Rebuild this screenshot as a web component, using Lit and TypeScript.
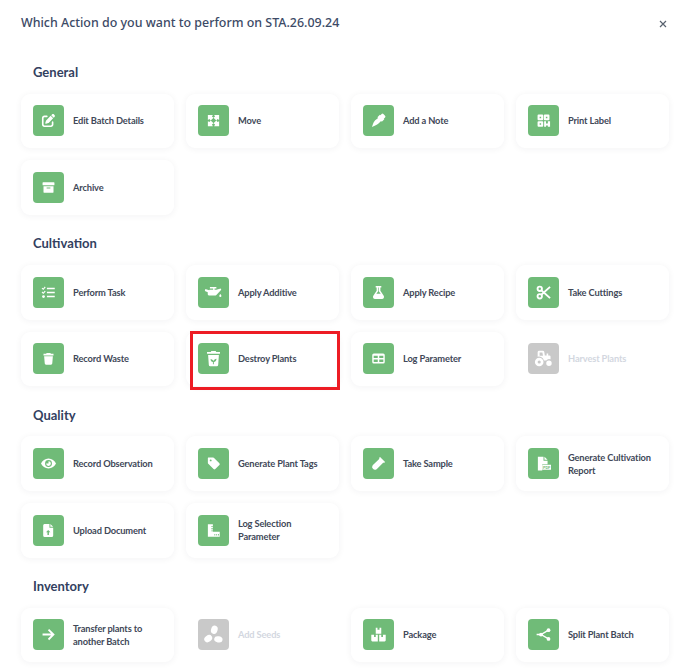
import { LitElement, html, css, svg, unsafeCSS } from 'lit';
import { customElement } from 'lit/decorators.js';

// green is the tile colour, used to cut details out of the white glyphs
const G = '#70bb78';

const icons: Record<string, any> = {
  edit: svg`<g transform="translate(1.5 1.5) scale(.041)"><path d="M471.6 21.7c-21.9-21.9-57.3-21.9-79.2 0L362.3 51.7l97.9 97.9 30.1-30.1c21.9-21.9 21.9-57.3 0-79.2L471.6 21.7zm-299.2 220c-6.1 6.1-10.8 13.6-13.5 21.9l-29.6 88.8c-2.9 8.6-.6 18.1 5.8 24.6s15.9 8.7 24.6 5.8l88.8-29.6c8.2-2.7 15.7-7.4 21.9-13.5L437.7 172.3 339.7 74.3 172.4 241.7zM96 64C43 64 0 107 0 160V416c0 53 43 96 96 96H352c53 0 96-43 96-96V320c0-17.7-14.3-32-32-32s-32 14.3-32 32v96c0 17.7-14.3 32-32 32H96c-17.7 0-32-14.3-32-32V160c0-17.7 14.3-32 32-32h96c17.7 0 32-14.3 32-32s-14.3-32-32-32H96z"/></g>`,
  move: svg`<path d="M3 3h8L9.500 5.500l2.500 2L7.500 12l-2-2.500L3 11zM21 3v8l-2.500-1.500-2 2.500L12 7.500l2.500-2L13 3zM3 21v-8l2.500 1.500 2-2.500 4.500 4.500-2.500 2L11 21zM21 21h-8l1.500-2.500-2.500-2 4.500-4.500 2 2.500L21 13z"/>`,
  note: svg`<path d="M15 3.500L17 1.500a2 2 0 0 1 2.800 0l2.700 2.700a2 2 0 0 1 0 2.800L20.500 9l.8.8-4 4-1.200-1.200-3.600 3.900c-1.700 1.700-3.600 2.800-5.800 3.400L1.500 22.500l1.800-5.200c.6-2.200 1.700-4.100 3.400-5.800L11.400 8 10.200 6.800l4-4z"/>`,
  qr: svg`<path fill-rule="evenodd" d="M4 2.500h6a1.500 1.500 0 0 1 1.500 1.500v6a1.500 1.500 0 0 1-1.500 1.500H4A1.500 1.500 0 0 1 2.500 10V4A1.500 1.500 0 0 1 4 2.500zm1.800 3.300v2.400h2.400V5.800zM14 2.500h6A1.500 1.500 0 0 1 21.500 4v6a1.500 1.500 0 0 1-1.500 1.500h-6a1.500 1.500 0 0 1-1.500-1.500V4A1.500 1.500 0 0 1 14 2.500zm1.800 3.300v2.400h2.400V5.800zM4 13h6a1.500 1.500 0 0 1 1.500 1.500v6A1.500 1.500 0 0 1 10 22H4a1.500 1.500 0 0 1-1.500-1.500v-6A1.500 1.500 0 0 1 4 13zm1.800 3.300v2.400h2.400v-2.400zM13 13h3v3l1.500 1.500L19 16v-3h3.500v9H19v-2h-3v2h-3z"/>`,
  archive: svg`<path fill-rule="evenodd" d="M3.500 3.500h17a1 1 0 0 1 1 1v3a1 1 0 0 1-1 1h-17a1 1 0 0 1-1-1v-3a1 1 0 0 1 1-1zM4 10h16v9a1.500 1.500 0 0 1-1.500 1.500h-13A1.500 1.500 0 0 1 4 19zm5 2v1.500h6V12z"/>`,
  tasks: svg`<path d="M9.500 4.500H22v2.400H9.500zM9.500 10.800H22v2.400H9.500zM9.500 17.100H22v2.400H9.500z"/><path d="M2.300 4.200l1.300 1.300L6 2.500l1.500 1.200L3.700 8 1 5.500zM2.200 10.500l1.400 1.400L6 9l1.500 1.200-3.800 4.300L1 11.800z"/><circle cx="4" cy="18.500" r="2.300"/>`,
  oil: svg`<g transform="translate(12 12) scale(1.15) translate(-12 -12)"><path d="M6.500 8h5V6.500H7V4.500h9v2h-2.500V8H16l6-1.500.8 1.500-6.800 7.500a1.500 1.500 0 0 1-1.100.5H5.500A1.500 1.500 0 0 1 4 14.500v-2.700L0 10l.6-3 5.400 2z"/><path d="M21.500 14c.9 1.200 1.500 2 1.500 2.800a1.500 1.500 0 0 1-3 0c0-.8.600-1.600 1.500-2.800z"/></g>`,
  flask: svg`<path fill-rule="evenodd" d="M7.500 1.500h9V4H15v5l5.300 8.300c1.400 2.200-.1 5.200-2.800 5.200h-11c-2.700 0-4.200-3-2.800-5.200L9 9V4H7.500zm4 2.500v6L8.500 14h7l-3-4V4z"/>`,
  cut: svg`<g fill="none" stroke="#fff" stroke-width="3"><circle cx="6" cy="6" r="3.500"/><circle cx="6" cy="18" r="3.500"/><path d="M8.500 8.500L22.500 21M8.500 15.500L22.500 3"/></g>`,
  trash: svg`<path d="M9 3h6l.8 1.500H20V7H4V4.500h4.200zM5 8.500h14L18 20a2 2 0 0 1-2 1.800H8a2 2 0 0 1-2-1.800z"/>`,
  destroy: svg`<g transform="translate(12 12) scale(1.15) translate(-12 -12)"><path d="M9 1.500h6l.8 1.500H21v2.500H3V3h5.200zM4.500 7h15L18.500 21a2 2 0 0 1-2 1.800h-9a2 2 0 0 1-2-1.800z"/><path fill="${G}" d="M11.200 20v-3.200C9.400 16.700 8 15.300 7.800 13c2 0 3.500.8 4.100 2.400.6-1.800 2.200-3 4.300-3.200-.1 2.600-1.500 4.300-3.700 4.500V20z"/></g>`,
  table: svg`<path fill-rule="evenodd" d="M4.500 4h15A2.500 2.500 0 0 1 22 6.500v11a2.500 2.500 0 0 1-2.500 2.500h-15A2.500 2.500 0 0 1 2 17.500v-11A2.500 2.500 0 0 1 4.500 4zm-.2 3.500v3.700h6.500V7.500zm8.900 0v3.700h6.500V7.500zm-8.900 6v4h6.500v-4zm8.900 0v4h6.500v-4z"/>`,
  tractor: svg`<g transform="translate(12 12) scale(1.25) translate(-12 -12)"><path fill-rule="evenodd" d="M6 2h5a2 2 0 0 1 2 1.700l.7 4.300H16V5.500h2V8h1.500A1.500 1.500 0 0 1 21 9.500V13a4.500 4.500 0 0 0-5.500 1.500h-3A6.500 6.500 0 0 0 4.500 9.700V4a2 2 0 0 1 1.500-2zm1 2.200v4.300h4.300l-.7-4.300zM6.500 11a5.500 5.500 0 1 1 0 11 5.500 5.500 0 0 1 0-11zm0 3.500a2 2 0 1 0 0 4 2 2 0 0 0 0-4zM19 14.500a3.500 3.500 0 1 1 0 7 3.500 3.500 0 0 1 0-7z"/></g>`,
  eye: svg`<path fill-rule="evenodd" d="M12 4c5.500 0 9.800 3.500 12 8-2.200 4.500-6.500 8-12 8S2.200 16.500 0 12c2.200-4.500 6.500-8 12-8zm0 2.500a5.500 5.500 0 1 0 0 11 5.500 5.500 0 0 0 0-11z"/><path fill-rule="evenodd" d="M12 8.200a3.800 3.800 0 1 1-3.800 3.800H12z"/>`,
  tag: svg`<path fill-rule="evenodd" d="M3.500 2.500h8a2 2 0 0 1 1.400.6l8.500 8.500a2 2 0 0 1 0 2.800l-6.500 6.500a2 2 0 0 1-2.800 0L3.600 12.400A2 2 0 0 1 3 11V3a.5.5 0 0 1 .5-.5zM7.500 5.500a1.500 1.500 0 1 0 0 3 1.500 1.500 0 0 0 0-3z"/>`,
  vial: svg`<path d="M14.500 1.500l8 8-1.700 1.700-1-1L9 21a4.500 4.500 0 0 1-6.300-6.300L13.500 4.200l-.7-1z"/>`,
  pdf: svg`<path d="M3 1h9v6.500h6.500V13H10v10H3z"/><path d="M13.500 1l5 5h-5z"/><path fill="#fff" d="M10 14h14v8H10z"/><text x="17" y="20.300" text-anchor="middle" font-family="Liberation Sans, sans-serif" font-weight="700" font-size="6" fill="${G}">PDF</text>`,
  upload: svg`<path d="M5.500 1.500h8v6h6V20a2.500 2.500 0 0 1-2.500 2.500H6A2.500 2.500 0 0 1 3.500 20V4a2.500 2.500 0 0 1 2-2.500zM15 1.500l4.500 4.500H15z"/><path fill="${G}" d="M11.500 11l3.500 3.700h-2.300V19h-2.400v-4.300H8z"/>`,
  ruler: svg`<path d="M3 2h8v12h11v8H3z"/><path fill="${G}" d="M8.500 5H11v1.300H8.500zM8.500 8.500H11v1.300H8.500zM8.500 12H11v1.300H8.500zM13.500 20v-2.500h1.300V20zM16.500 20v-2.500h1.300V20zM19.500 20v-2.500h1.300V20z"/>`,
  arrow: svg`<path d="M2.500 10.300h13.500l-5-5L13 3l9 9-9 9-2-2.300 5-5H2.500z"/>`,
  seeds: svg`<g transform="translate(12 12) scale(1.3) translate(-12 -12)"><ellipse cx="13" cy="6.200" rx="4" ry="5.200" transform="rotate(18 13 6.200)"/><ellipse cx="5.500" cy="17" rx="5.200" ry="4" transform="rotate(-35 5.500 17)"/><ellipse cx="18" cy="18" rx="5.200" ry="3.800" transform="rotate(12 18 18)"/></g>`,
  boxes: svg`<g transform="translate(12 12) scale(1.1) translate(-12 -12)"><path d="M8 2h2.500v3h3V2H16v9H8zM1.500 12.500h4v3h2.500v-3h3V22H3a1.500 1.500 0 0 1-1.500-1.500zM13 12.500h3v3h2.500v-3h4v8A1.500 1.500 0 0 1 21 22h-8z"/></g>`,
  split: svg`<circle cx="8" cy="12" r="3"/><circle cx="20" cy="5" r="3"/><circle cx="20" cy="19" r="3"/><path fill="none" stroke="#fff" stroke-width="2.200" d="M1 12h7l12-7M8 12l12 7"/>`,
};

interface Action {
  label: string;
  icon: string;
  disabled?: boolean;
  marked?: boolean;
}

const sections: { title: string; actions: Action[] }[] = [
  {
    title: 'General',
    actions: [
      { label: 'Edit Batch Details', icon: 'edit' },
      { label: 'Move', icon: 'move' },
      { label: 'Add a Note', icon: 'note' },
      { label: 'Print Label', icon: 'qr' },
      { label: 'Archive', icon: 'archive' },
    ],
  },
  {
    title: 'Cultivation',
    actions: [
      { label: 'Perform Task', icon: 'tasks' },
      { label: 'Apply Additive', icon: 'oil' },
      { label: 'Apply Recipe', icon: 'flask' },
      { label: 'Take Cuttings', icon: 'cut' },
      { label: 'Record Waste', icon: 'trash' },
      { label: 'Destroy Plants', icon: 'destroy', marked: true },
      { label: 'Log Parameter', icon: 'table' },
      { label: 'Harvest Plants', icon: 'tractor', disabled: true },
    ],
  },
  {
    title: 'Quality',
    actions: [
      { label: 'Record Observation', icon: 'eye' },
      { label: 'Generate Plant Tags', icon: 'tag' },
      { label: 'Take Sample', icon: 'vial' },
      { label: 'Generate Cultivation Report', icon: 'pdf' },
      { label: 'Upload Document', icon: 'upload' },
      { label: 'Log Selection Parameter', icon: 'ruler' },
    ],
  },
  {
    title: 'Inventory',
    actions: [
      { label: 'Transfer plants to another Batch', icon: 'arrow' },
      { label: 'Add Seeds', icon: 'seeds', disabled: true },
      { label: 'Package', icon: 'boxes' },
      { label: 'Split Plant Batch', icon: 'split' },
    ],
  },
];

@customElement('app-root')
export class AppRoot extends LitElement {
  static styles = css`
    :host {
      display: block;
      height: 670px;
      overflow: hidden;
      background: #fff;
      font-family: Lato, 'Noto Sans', sans-serif;
    }

    .modal {
      padding: 14px 21px 0;
    }

    .head {
      display: flex;
      justify-content: space-between;
      align-items: center;
      height: 18px;
      margin-bottom: 32px;
    }

    .head h1 {
      margin: 0;
      font-family: 'Noto Sans', sans-serif;
      font-size: 12.450px;
      line-height: 18px;
      font-weight: 500;
      color: #3c4a66;
    }

    .close {
      display: block;
      margin: 2px 0 0;
    }

    section h2 {
      margin: 0 0 12.500px 12px;
      font-size: 13px;
      line-height: 17px;
      font-weight: 700;
      color: #33415f;
    }

    section {
      margin-bottom: 20.400px;
    }

    .grid {
      display: grid;
      grid-template-columns: repeat(4, 153px);
      column-gap: 12px;
      grid-auto-rows: 54.700px;
      row-gap: 12.100px;
    }

    .card {
      position: relative;
      display: flex;
      align-items: center;
      gap: 9px;
      padding: 0 12px;
      border-radius: 9px;
      background: #fff;
      box-shadow: 0 1px 7px rgba(30, 40, 60, 0.055);
      font-size: 9.300px;
      letter-spacing: -0.15px;
      line-height: 13px;
      font-weight: 700;
      color: #414858;
    }

    .card.off {
      box-shadow: none;
      color: #d3d7df;
    }

    .tile {
      flex: none;
      display: flex;
      align-items: center;
      justify-content: center;
      width: 31px;
      height: 31px;
      border-radius: 4px;
      background: ${unsafeCSS(G)};
    }

    .off .tile {
      background: #c9c9c9;
    }

    .tile svg {
      width: 15px;
      height: 15px;
      fill: #fff;
      overflow: visible;
    }

    .mark {
      position: absolute;
      left: 4px;
      top: -1px;
      right: -1px;
      bottom: -3.500px;
      border: 3.700px solid #ed1c24;
    }
  `;

  render() {
    return html`
      <div class="modal">
        <div class="head">
          <h1>Which Action do you want to perform on STA.26.09.24</h1>
          <svg class="close" width="8" height="8" viewBox="0 0 8 8">
            <path d="M1 1l6 6M7 1L1 7" stroke="#59626f" stroke-width="1.200" />
          </svg>
        </div>
        ${sections.map(
          (s) => html`
            <section>
              <h2>${s.title}</h2>
              <div class="grid">
                ${s.actions.map(
                  (a) => html`
                    <div class="card ${a.disabled ? 'off' : ''}">
                      <div class="tile">
                        <svg viewBox="0 0 24 24">${icons[a.icon]}</svg>
                      </div>
                      <span>${a.label}</span>
                      ${a.marked ? html`<div class="mark"></div>` : ''}
                    </div>
                  `,
                )}
              </div>
            </section>
          `,
        )}
      </div>
    `;
  }
}
